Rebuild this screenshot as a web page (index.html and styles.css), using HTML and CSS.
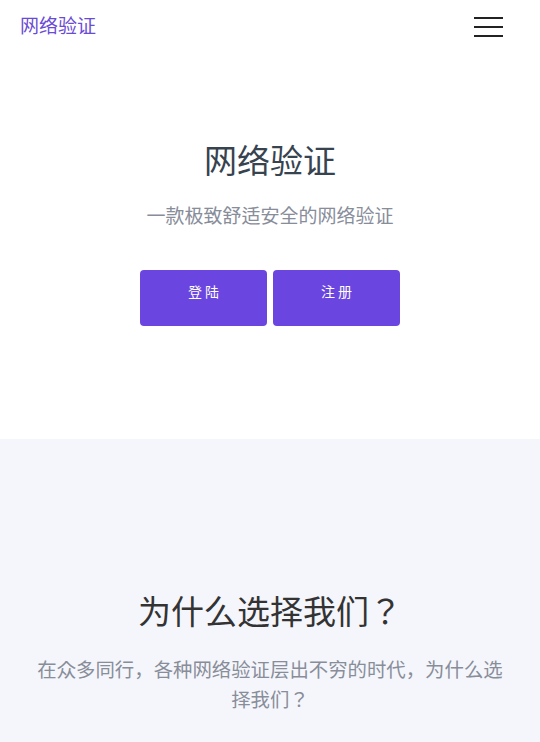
FILE: index.html
```html
<!DOCTYPE html>
<html lang="zh-CN">
<head>
    <meta charset="UTF-8">
    <meta name="viewport" content="width=device-width, initial-scale=1.0">
    <title>网络验证</title>
    <link rel="stylesheet" href="styles.css">
</head>
<body>
    <header class="navbar">
        <a class="brand" href="#">网络验证</a>
        <button class="menu-toggle" aria-label="菜单">
            <span></span>
            <span></span>
            <span></span>
        </button>
    </header>

    <section class="hero">
        <h1>网络验证</h1>
        <p class="lead">一款极致舒适安全的网络验证</p>
        <div class="actions">
            <a class="btn" href="#">登 陆</a>
            <a class="btn" href="#">注 册</a>
        </div>
    </section>

    <section class="why">
        <h2>为什么选择我们？</h2>
        <p class="lead">在众多同行，各种网络验证层出不穷的时代，为什么选择我们？</p>
    </section>
</body>
</html>
```

FILE: styles.css
```css
body {
    margin: 0;
    font-family: "Noto Sans CJK JP", "Noto Sans CJK SC", sans-serif;
    font-feature-settings: "locl" 0;
    background-color: #fff;
    color: #333;
}
.navbar {
    height: 52px;
    display: flex;
    align-items: center;
    justify-content: space-between;
    padding: 0 37px 0 20px;
}
.brand {
    color: #6a4bd6;
    font-size: 19px;
    text-decoration: none;
    margin-bottom: 3px;
}
.menu-toggle {
    width: 29px;
    height: 20px;
    margin-top: 2px;
    padding: 0;
    border: none;
    background: none;
    display: flex;
    flex-direction: column;
    justify-content: space-between;
}
.menu-toggle span {
    display: block;
    height: 2px;
    background-color: #222;
}
.hero {
    height: 387px;
    text-align: center;
    padding-top: 84px;
    box-sizing: border-box;
}
.hero h1 {
    margin: 0;
    font-size: 33px;
    font-weight: 400;
    color: #37434f;
    line-height: 46px;
}
.lead {
    margin: 0;
    font-size: 19px;
    color: #888d9a;
}
.hero .lead {
    margin-top: 13px;
    line-height: 40px;
}
.actions {
    display: flex;
    justify-content: center;
    gap: 6px;
    margin-top: 35px;
}
.btn {
    width: 127px;
    height: 56px;
    box-sizing: border-box;
    padding-top: 9px;
    background-color: #6a45e0;
    color: #fff;
    font-size: 14px;
    line-height: 24px;
    text-decoration: none;
    border-radius: 4px;
}
.why {
    background-color: #f5f6fb;
    text-align: center;
    padding: 147px 34px 40px;
}
.why h2 {
    margin: 0;
    font-size: 33px;
    font-weight: 400;
    color: #333;
    line-height: 48px;
}
.why .lead {
    margin-top: 20px;
    font-size: 19.4px;
    line-height: 30px;
}
```
